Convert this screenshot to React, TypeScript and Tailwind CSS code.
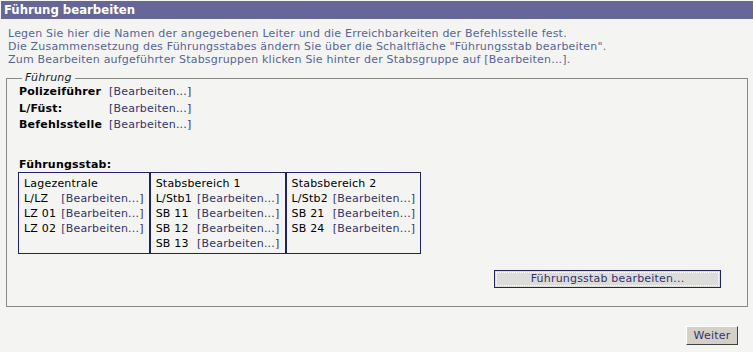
// Führung bearbeiten – Maske mit Leitern und Führungsstab-Übersicht.

const font = { fontFamily: '"DejaVu Sans", Verdana, sans-serif' }
const titleFont = { fontFamily: '"DejaVu Sans Condensed", "DejaVu Sans", sans-serif' }

interface Bereich {
  titel: string
  stellen: string[]
}

const bereiche: Bereich[] = [
  { titel: 'Lagezentrale', stellen: ['L/LZ', 'LZ 01', 'LZ 02'] },
  { titel: 'Stabsbereich 1', stellen: ['L/Stb1', 'SB 11', 'SB 12', 'SB 13'] },
  { titel: 'Stabsbereich 2', stellen: ['L/Stb2', 'SB 21', 'SB 24'] },
]

const leiter = ['Polizeiführer', 'L/Füst:', 'Befehlsstelle']

function Bearbeiten() {
  return <span className="text-[#33336e]">[Bearbeiten...]</span>
}

export default function App() {
  return (
    <div
      className="h-[352px] w-[753px] bg-[#f4f5f2] pt-px text-[11px] leading-[12px] tracking-[0.2px]"
      style={font}
    >
      <div
        className="ml-px h-[18px] bg-[#666699] pl-[3px] text-[13px] font-bold leading-[18px] tracking-normal text-white"
        style={titleFont}
      >
        Führung bearbeiten
      </div>

      <div className="mt-[8px] pl-2 leading-[13px] text-[#56649c]">
        <p>Legen Sie hier die Namen der angegebenen Leiter und die Erreichbarkeiten der Befehlsstelle fest.</p>
        <p>Die Zusammensetzung des Führungsstabes ändern Sie über die Schaltfläche "Führungsstab bearbeiten".</p>
        <p>Zum Bearbeiten aufgeführter Stabsgruppen klicken Sie hinter der Stabsgruppe auf [Bearbeiten...].</p>
      </div>

      <fieldset className="ml-[6px] mr-[5px] mt-[6px] h-[235px] border border-[#888888] px-3 pt-0">
        <legend className="ml-[3px] px-[3px] italic text-[#222]">Führung</legend>

        <div className="mt-[2px] flex flex-col gap-[4.5px]">
          {leiter.map((name) => (
            <div key={name} className="flex">
              <span className="w-[90px] font-bold text-black">{name}</span>
              <Bearbeiten />
            </div>
          ))}
        </div>

        <div className="mt-[28px] font-bold text-black">Führungsstab:</div>
        <div className="ml-[-1px] mt-[1px] flex">
          {bereiche.map((b) => (
            <div key={b.titel} className="h-[82px] border border-[#222266] px-[5px] pt-[3px] leading-[15px]">
              <div className="text-black">{b.titel}</div>
              <div className="grid grid-cols-[auto_auto] gap-x-[5px]">
                {b.stellen.map((s) => (
                  <div key={s} className="contents">
                    <span className="text-black">{s}</span>
                    <Bearbeiten />
                  </div>
                ))}
              </div>
            </div>
          ))}
        </div>

        <div className="mt-[16px] flex justify-end pr-[14px]">
          <button className="h-[18px] w-[227px] border border-[#222266] bg-[#dcdcda] text-[11px] tracking-[0.2px] text-[#33336e] outline-1 outline-offset-[-3px] outline-dotted outline-white">
            Führungsstab bearbeiten...
          </button>
        </div>
      </fieldset>

      <div className="mt-[19px] flex justify-end pr-[15px]">
        <button className="h-[19px] w-[52px] border border-b-[#404040] border-l-white border-r-[#404040] border-t-white bg-[#d4d0c8] text-[11px] tracking-[0.2px] text-[#33336e]">
          Weiter
        </button>
      </div>
    </div>
  )
}
